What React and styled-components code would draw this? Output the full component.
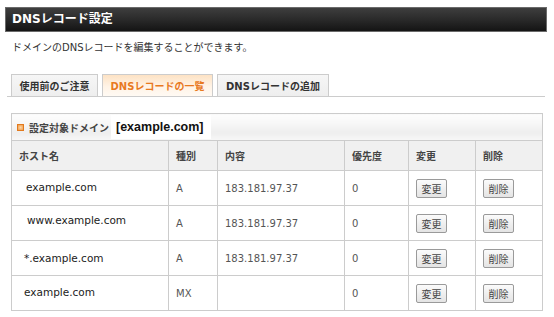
import React from "react";
import styled, { createGlobalStyle } from "styled-components";

const Global = createGlobalStyle`
  html, body { margin: 0; padding: 0; background: #fff; }
  body {
    font-family: "DejaVu Sans", "Noto Sans CJK JP", sans-serif;
    font-size: 10px;
    color: #333;
  }
`;

const Page = styled.div`
  width: 554px;
  height: 317px;
  box-sizing: border-box;
  padding: 7px 7px 0 5px;
  overflow: hidden;
`;

const TitleBar = styled.h1`
  margin: 0;
  height: 25px;
  box-sizing: border-box;
  border: 1px solid #6a6a6a;
  background: linear-gradient(#3e3e3e, #2a2a2a 50%, #141414);
  color: #fff;
  font-size: 12px;
  font-weight: bold;
  line-height: 23px;
  padding-left: 6px;
  font-family: "DejaVu Sans", "Noto Sans CJK JP", sans-serif;
`;

const Desc = styled.p`
  margin: 10px 0 0 7px;
  line-height: 12px;
  font-size: 10px;
  color: #333;
`;

const TabBar = styled.div`
  display: flex;
  align-items: flex-end;
  gap: 4px;
  margin: 20px 2px 0 2px;
  padding-left: 4px;
  border-bottom: 1px solid #cccccc;
`;

const Tab = styled.div`
  height: 22px;
  box-sizing: border-box;
  width: ${(p) => p.$w}px;
  border: 1px solid #cccccc;
  border-bottom: none;
  display: flex;
  align-items: center;
  justify-content: center;
  font-weight: bold;
  font-size: 10px;
  color: ${(p) => (p.$active ? "#e8791f" : "#333")};
  background: ${(p) =>
    p.$active
      ? "linear-gradient(#fde2c4, #fff3e6 55%, #fffaf4)"
      : "linear-gradient(#f6f6f6, #eeeeee)"};
`;

const Table = styled.table`
  margin: 16px 0 0 6px;
  width: 532px;
  table-layout: fixed;
  border-collapse: collapse;
  border: 1px solid #cccccc;
`;

const TitleCell = styled.td`
  height: 26px;
  padding: 0 0 0 5px;
  border: 1px solid #cccccc;
  background: linear-gradient(#fdfdfd, #f7f7f7 35%, #eeeeee 70%, #f7f7f7);
  vertical-align: middle;
`;

const TitleInner = styled.div`
  display: flex;
  align-items: center;
  height: 26px;
`;

const Marker = styled.span`
  width: 7px;
  height: 7px;
  box-sizing: border-box;
  border: 1px solid #e27a1e;
  background: radial-gradient(#fcd7a8, #f09a46);
  margin-right: 5px;
`;

const TitleLabel = styled.span`
  font-size: 10px;
  font-weight: bold;
  color: #444;
`;

const TitleDomain = styled.span`
  display: flex;
  align-items: center;
  height: 24px;
  padding: 0 7px 0 5px;
  margin-left: 2px;
  background: #fff;
  font-family: "Liberation Sans", "Noto Sans CJK JP", sans-serif;
  font-size: 12.5px;
  font-weight: bold;
  color: #111;
`;

const HeadCell = styled.th`
  height: 29px;
  padding: 0 7px;
  border: 1px solid #cccccc;
  background: #f0f0f0;
  text-align: left;
  font-weight: bold;
  font-size: 10px;
  color: #444;
  vertical-align: middle;
`;

const Cell = styled.td`
  height: 34px;
  padding: 0 7px;
  border: 1px solid #cccccc;
  background: #fff;
  font-size: 10px;
  color: #555;
  vertical-align: middle;
`;

const HostCell = styled(Cell)`
  padding-left: ${(p) => p.$indent}px;
`;

const HostText = styled.span`
  display: block;
  margin-bottom: ${(p) => p.$lift * 2}px;
  font-size: 10.5px;
  line-height: 13px;
  color: #222;
`;

const Btn = styled.button`
  width: 31px;
  height: 19px;
  padding: 0;
  margin: 0;
  border: 1px solid #9a9a9a;
  border-radius: 2px;
  background: linear-gradient(#fbfbfb, #e4e4e4);
  font-family: "Noto Sans CJK JP", sans-serif;
  font-size: 10px;
  color: #444;
  line-height: 17px;
  display: block;
`;

const records = [
  { host: "example.com", type: "A", value: "183.181.97.37", prio: "0", indent: 14, lift: 0.5 },
  { host: "www.example.com", type: "A", value: "183.181.97.37", prio: "0", indent: 15, lift: 3 },
  { host: "*.example.com", type: "A", value: "183.181.97.37", prio: "0", indent: 12, lift: 0 },
  { host: "example.com", type: "MX", value: "", prio: "0", indent: 12, lift: 1 },
];

const cols = [157, 49, 127, 64, 67, 67];

export default function App() {
  return (
    <Page>
      <Global />
      <TitleBar>DNSレコード設定</TitleBar>
      <Desc>ドメインのDNSレコードを編集することができます。</Desc>
      <TabBar>
        <Tab $w={87}>使用前のご注意</Tab>
        <Tab $w={111} $active>DNSレコードの一覧</Tab>
        <Tab $w={112}>DNSレコードの追加</Tab>
      </TabBar>
      <Table>
        <colgroup>
          {cols.map((w, i) => (
            <col key={i} style={{ width: w }} />
          ))}
        </colgroup>
        <tbody>
          <tr>
            <TitleCell colSpan={6}>
              <TitleInner>
                <Marker />
                <TitleLabel>設定対象ドメイン</TitleLabel>
                <TitleDomain>[example.com]</TitleDomain>
              </TitleInner>
            </TitleCell>
          </tr>
          <tr>
            <HeadCell>ホスト名</HeadCell>
            <HeadCell>種別</HeadCell>
            <HeadCell>内容</HeadCell>
            <HeadCell>優先度</HeadCell>
            <HeadCell>変更</HeadCell>
            <HeadCell>削除</HeadCell>
          </tr>
          {records.map((r, i) => (
            <tr key={i}>
              <HostCell $indent={r.indent}>
                <HostText $lift={r.lift}>{r.host}</HostText>
              </HostCell>
              <Cell>{r.type}</Cell>
              <Cell>{r.value}</Cell>
              <Cell>{r.prio}</Cell>
              <Cell><Btn>変更</Btn></Cell>
              <Cell><Btn>削除</Btn></Cell>
            </tr>
          ))}
        </tbody>
      </Table>
    </Page>
  );
}
